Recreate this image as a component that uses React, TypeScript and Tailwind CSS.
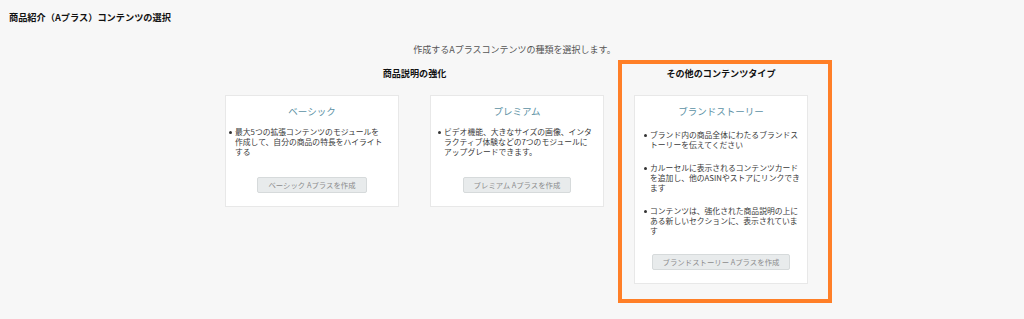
import React from "react";

const font = { fontFamily: '"Noto Sans CJK JP", "Noto Sans", sans-serif' };

type CardProps = {
  title: string;
  items: string[][];
  button: string;
  listPl: string;
  listMt: string;
  btnMt: string;
  itemGap: string;
};

function Card({ title, items, button, listPl, listMt, btnMt, itemGap }: CardProps) {
  return (
    <div className="w-[174px] bg-white border border-[#e8e8e8] flex flex-col pt-[9px] pb-[13px]">
      <div className="text-center text-[9.5px] leading-[13px] text-[#5b91a4]">{title}</div>
      <div className={`${listMt} ${listPl} flex flex-col ${itemGap}`}>
        {items.map((lines, i) => (
          <div key={i} className="flex items-start">
            <div className="w-[2.5px] h-[2.5px] rounded-full bg-[#333] mt-[4px] mr-[3.5px] shrink-0" />
            <div className="text-[7.8px] leading-[10px] text-[#3a3a3a]">
              {lines.map((l, j) => (
                <div key={j} className="whitespace-nowrap">{l}</div>
              ))}
            </div>
          </div>
        ))}
      </div>
      <div className={`${btnMt} flex justify-center`}>
        <div className="h-[16px] px-[10px] flex items-center bg-[#e8ebec] border border-[#d6dadb] rounded-[2px] text-[7.4px] text-[#8c8c8c] whitespace-nowrap">
          {button}
        </div>
      </div>
    </div>
  );
}

export default function App() {
  return (
    <div className="w-full h-[319px] bg-[#f7f7f7] overflow-hidden" style={font}>
      <div className="pt-[11px] pl-[9px] text-[9.2px] leading-[12px] font-bold text-[#111]">
        商品紹介（Aプラス）コンテンツの選択
      </div>
      <div className="mt-[21px] pl-[5px] text-center text-[9px] leading-[12px] text-[#555]">
        作成するAプラスコンテンツの種類を選択します。
      </div>
      <div className="mt-[4px] flex items-start pl-[225px]">
        <div className="w-[379px] pt-[7px] flex flex-col">
          <div className="text-center text-[9.1px] leading-[12px] font-bold text-[#111]">商品説明の強化</div>
          <div className="mt-[16px] flex gap-[31px]">
            <Card
              title="ベーシック"
              items={[["最大5つの拡張コンテンツのモジュールを", "作成して、自分の商品の特長をハイライト", "する"]]}
              button="ベーシック Aプラスを作成"
              listPl="pl-[3px]"
              listMt="mt-[9px]"
              btnMt="mt-[20px]"
              itemGap="gap-[13px]"
            />
            <Card
              title="プレミアム"
              items={[["ビデオ機能、大きなサイズの画像、インタ", "ラクティブ体験などの7つのモジュールに", "アップグレードできます。"]]}
              button="プレミアム Aプラスを作成"
              listPl="pl-[7px]"
              listMt="mt-[9px]"
              btnMt="mt-[20px]"
              itemGap="gap-[13px]"
            />
          </div>
        </div>
        <div className="ml-[14px] w-[214px] border-4 border-[#ff7f27] pt-[3px] pb-[15px] pl-[12px] flex flex-col">
          <div className="w-[174px] text-center text-[9.1px] leading-[12px] font-bold text-[#111]">その他のコンテンツタイプ</div>
          <div className="mt-[16px]">
            <Card
              title="ブランドストーリー"
              items={[
                ["ブランド内の商品全体にわたるブランドス", "トーリーを伝えてください"],
                ["カルーセルに表示されるコンテンツカード", "を追加し、他のASINやストアにリンクでき", "ます"],
                ["コンテンツは、強化された商品説明の上に", "ある新しいセクションに、表示されていま", "す"],
              ]}
              button="ブランドストーリー Aプラスを作成"
              listPl="pl-[9px]"
              listMt="mt-[12px]"
              btnMt="mt-[18px]"
              itemGap="gap-[13px]"
            />
          </div>
        </div>
      </div>
    </div>
  );
}
